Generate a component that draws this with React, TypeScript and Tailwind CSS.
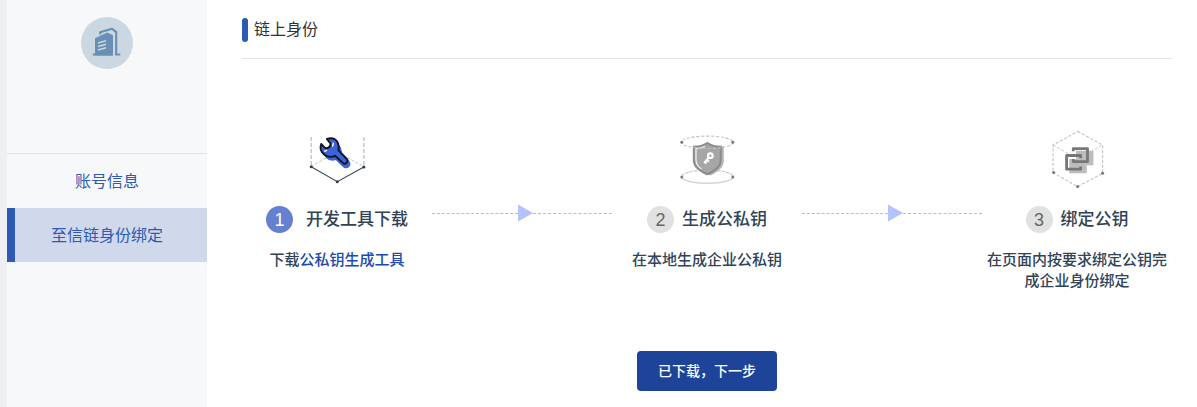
import type { ReactNode } from "react";

function CompanyIcon() {
  return (
    <svg className="size-[52px]" viewBox="0 0 52 52" fill="none" aria-hidden="true">
      <circle cx="26" cy="26" r="26" fill="#cbd8e2" />
      <path d="M14 21.3L26.3 15.6L32 18.2V38.4H14Z" fill="#6890b4" />
      <path d="M11.8 37.5H32M34 37.5H39.3" stroke="#6890b4" strokeWidth="1.8" />
      <path d="M19.2 17.5V15.2L31 11.8L35.2 14.8V38" stroke="#6890b4" strokeWidth="2.1" strokeLinejoin="round" />
      <path d="M17 26L25 23.8M17 29.5L25 27.3M17 33L25 30.8" stroke="#cbd8e2" strokeWidth="1.5" />
    </svg>
  );
}

const WRENCH =
  "M19.8 10C24 8.6 28.2 9.6 30.3 12.8C31.8 15.5 32 18.5 31.4 21.2L39.8 30C41.8 32.2 38.8 36 36.4 34.4L28 26.8C25 28.4 20.5 28.2 17.5 25.8C14 23 12.8 18.8 14.2 15L18 18.8C20 20.2 24.2 17.8 23.4 14.4Z";

function ToolIcon() {
  return (
    <svg className="size-[60px]" viewBox="0 0 60 60" fill="none" aria-hidden="true">
      <path d="M4.2 8V37.5M56.9 8V37.5" stroke="#b4bcc6" strokeWidth="1.2" strokeDasharray="4 2" />
      <path d="M4.2 37.5L30.3 23L56.9 37.5" stroke="#b4bcc6" strokeWidth="0.9" strokeDasharray="3 1.6" />
      <path d="M4.2 37.7L30.3 52.7L56.9 38" stroke="#3c4650" strokeWidth="1.1" />
      <g fill="#2f3c4a">
        <circle cx="4.2" cy="37.7" r="1.5" />
        <circle cx="30.3" cy="52.7" r="1.5" />
        <circle cx="56.9" cy="38" r="1.5" />
      </g>
      <circle cx="25.5" cy="22.5" r="9.3" fill="#3d63d8" />
      <path d="M27 23L39 34.8" stroke="#3d63d8" strokeWidth="8.8" strokeLinecap="round" />
      <path d="M14.5 15L18.2 18.8L22 18.4L23.6 15L20 10L16 9Z" fill="#fff" />
      <path d={WRENCH} fill="#3d63d8" stroke="#10151f" strokeWidth="1.9" strokeLinejoin="round" />
      <path d="M17.6 22.3L19.6 21.4M25.6 17L26.4 14.2" stroke="#fff" strokeWidth="1.4" strokeLinecap="round" />
    </svg>
  );
}

function ShieldIcon() {
  return (
    <svg className="size-[60px]" viewBox="0 0 60 60" fill="none" aria-hidden="true">
      <ellipse cx="30.3" cy="47.7" rx="26" ry="6.5" stroke="#cecece" strokeWidth="1.2" />
      <path d="M4.3 47.7A26 6.5 0 0 1 56.3 47.7" stroke="#fff" strokeWidth="1.3" strokeDasharray="1.5 3" />
      <path
        d="M32 14C36.5 16.8 41.5 17.6 46.8 17.6V32C46.8 38.5 40 43.5 33.5 46.4C26 43.5 19 38.5 19 32V18C23 18 28 17 32 14Z"
        fill="#b6b6b6"
      />
      <path
        d="M30.3 14C34.5 16.8 39 17.7 43.8 17.7V31C43.8 37.5 37 42.5 30.3 45.2C23.5 42.5 16.8 37.5 16.8 31V17.7C21.5 17.7 26 16.8 30.3 14Z"
        fill="#a6a6a6"
        stroke="#8c8c8c"
        strokeWidth="2"
      />
      <path d="M28 17.2C25.5 18.6 22 19.5 19 19.6V31C19 35 21.5 38 24.5 40" stroke="#f5f5f5" strokeWidth="1.2" />
      <ellipse cx="30.3" cy="13.3" rx="26" ry="6.2" stroke="#c0c0c0" strokeWidth="1.1" strokeDasharray="3 1.8" />
      <g fill="#7a7a7a">
        <circle cx="4.8" cy="13.3" r="1.5" />
        <circle cx="55.8" cy="13.3" r="1.5" />
        <circle cx="4.8" cy="48" r="1.5" />
        <circle cx="55.8" cy="48" r="1.5" />
      </g>
      <circle cx="33.3" cy="26.7" r="2.3" stroke="#fff" strokeWidth="2.2" />
      <path d="M31.8 28.5L27.2 34M29.8 31L32 32.6M27.8 33L29.6 34.6" stroke="#fff" strokeWidth="2" />
    </svg>
  );
}

function BindIcon() {
  return (
    <svg className="size-[60px]" viewBox="0 0 60 60" fill="none" aria-hidden="true">
      <path d="M29 21.8H46.4V36.3H39.8V44.3H22.3V29.5H29Z" fill="#bcbcbc" />
      <path
        d="M30.7 2.5L55.6 16V44.3L30.7 57.6L6 43.6V16Z"
        stroke="#c2c2c2"
        strokeWidth="1.1"
        strokeDasharray="3 1.8"
      />
      <path d="M6 16L30.7 30L55.6 16" stroke="#c9c9c9" strokeWidth="1" strokeDasharray="3 1.8" />
      <path d="M21 28H29V30H22V39H21Z" fill="#fff" />
      <g stroke="#777" strokeWidth="2.8" strokeLinejoin="round">
        <path d="M26.3 22.2V19.6H40.5V32.6H26.3V30" />
        <path d="M33.7 29.2V26.5H19.6V40.2H33.7V37.5" />
      </g>
      <g fill="#777">
        <circle cx="6.6" cy="43.6" r="1.5" />
        <circle cx="30.7" cy="57.6" r="1.5" />
        <circle cx="55.6" cy="44.3" r="1.5" />
      </g>
    </svg>
  );
}

function Arrow() {
  return (
    <li className="mt-[75px] flex h-[18px] min-w-10 flex-1 items-center" aria-hidden="true">
      <span className="grow basis-[7px] border-t border-dashed border-[#a9bcf5]" />
      <svg className="h-[18px] w-[15px]" viewBox="0 0 15 18">
        <path d="M0 0.5L15 9L0 17.5Z" fill="#b2c4fb" />
      </svg>
      <span className="grow basis-0 border-t border-dashed border-[#a9bcf5]" />
    </li>
  );
}

type StepProps = {
  index: number;
  title: string;
  icon: ReactNode;
  active?: boolean;
  children: ReactNode;
};

function Step({ index, title, icon, active, children }: StepProps) {
  return (
    <li className="flex w-[190px] flex-col items-center px-[5px] text-[#304359]">
      {icon}
      <h2
        className={`mt-[17px] flex items-center text-[17px] leading-[27px] font-medium ${active ? "gap-[13px]" : "gap-2"}`}
      >
        <span
          className={`flex size-[27px] items-center justify-center rounded-full text-lg font-normal ${active ? "bg-[#6680d1] text-white" : "bg-[#e1e1e1] text-[#666]"}`}
        >
          {index}
        </span>
        {title}
      </h2>
      <p className="mt-4 text-center text-[15px] leading-[21px] font-medium">{children}</p>
    </li>
  );
}

export default function App() {
  return (
    <div className="flex min-h-screen bg-white font-['Liberation_Sans','Noto_Sans_CJK_SC',sans-serif]">
      <aside className="w-[207px] shrink-0 border-l-[7px] border-[#edeff3] bg-[#f6f8fa]">
        <div className="flex justify-center border-b border-[#e2e5e9] pt-[17px] pb-[84px]">
          <CompanyIcon />
        </div>
        <nav className="text-center text-base leading-[56px] text-[#2d5ab4]">
          <a href="#account" className="block h-[54px]">
            账号信息
          </a>
          <a
            href="#identity"
            aria-current="page"
            className="block h-[54px] border-l-8 border-[#2d5ab4] bg-[#d0d8ec] pr-2"
          >
            至信链身份绑定
          </a>
        </nav>
      </aside>
      <main className="min-w-0 flex-1 pr-[25px] pb-4 pl-[35px]">
        <header className="flex items-center gap-1.5 border-b border-[#e4e4e4] pt-[18px] pb-4">
          <span className="h-6 w-1.5 rounded-full bg-[#2d5ab4]" />
          <h1 className="text-base leading-6 text-[#303133]">链上身份</h1>
        </header>
        <ol className="flex items-start justify-between pt-[70px]">
          <Step index={1} title="开发工具下载" icon={<ToolIcon />} active>
            下载
            <a href="#tool" className="text-[#2049b0]">
              公私钥生成工具
            </a>
          </Step>
          <Arrow />
          <Step index={2} title="生成公私钥" icon={<ShieldIcon />}>
            在本地生成企业公私钥
          </Step>
          <Arrow />
          <Step index={3} title="绑定公钥" icon={<BindIcon />}>
            在页面内按要求绑定公钥完成企业身份绑定
          </Step>
        </ol>
        <div className="mt-[60px] flex justify-center">
          <button type="button" className="h-10 rounded bg-[#1d4499] px-[21px] text-sm font-medium text-white">
            已下载，下一步
          </button>
        </div>
      </main>
    </div>
  );
}
